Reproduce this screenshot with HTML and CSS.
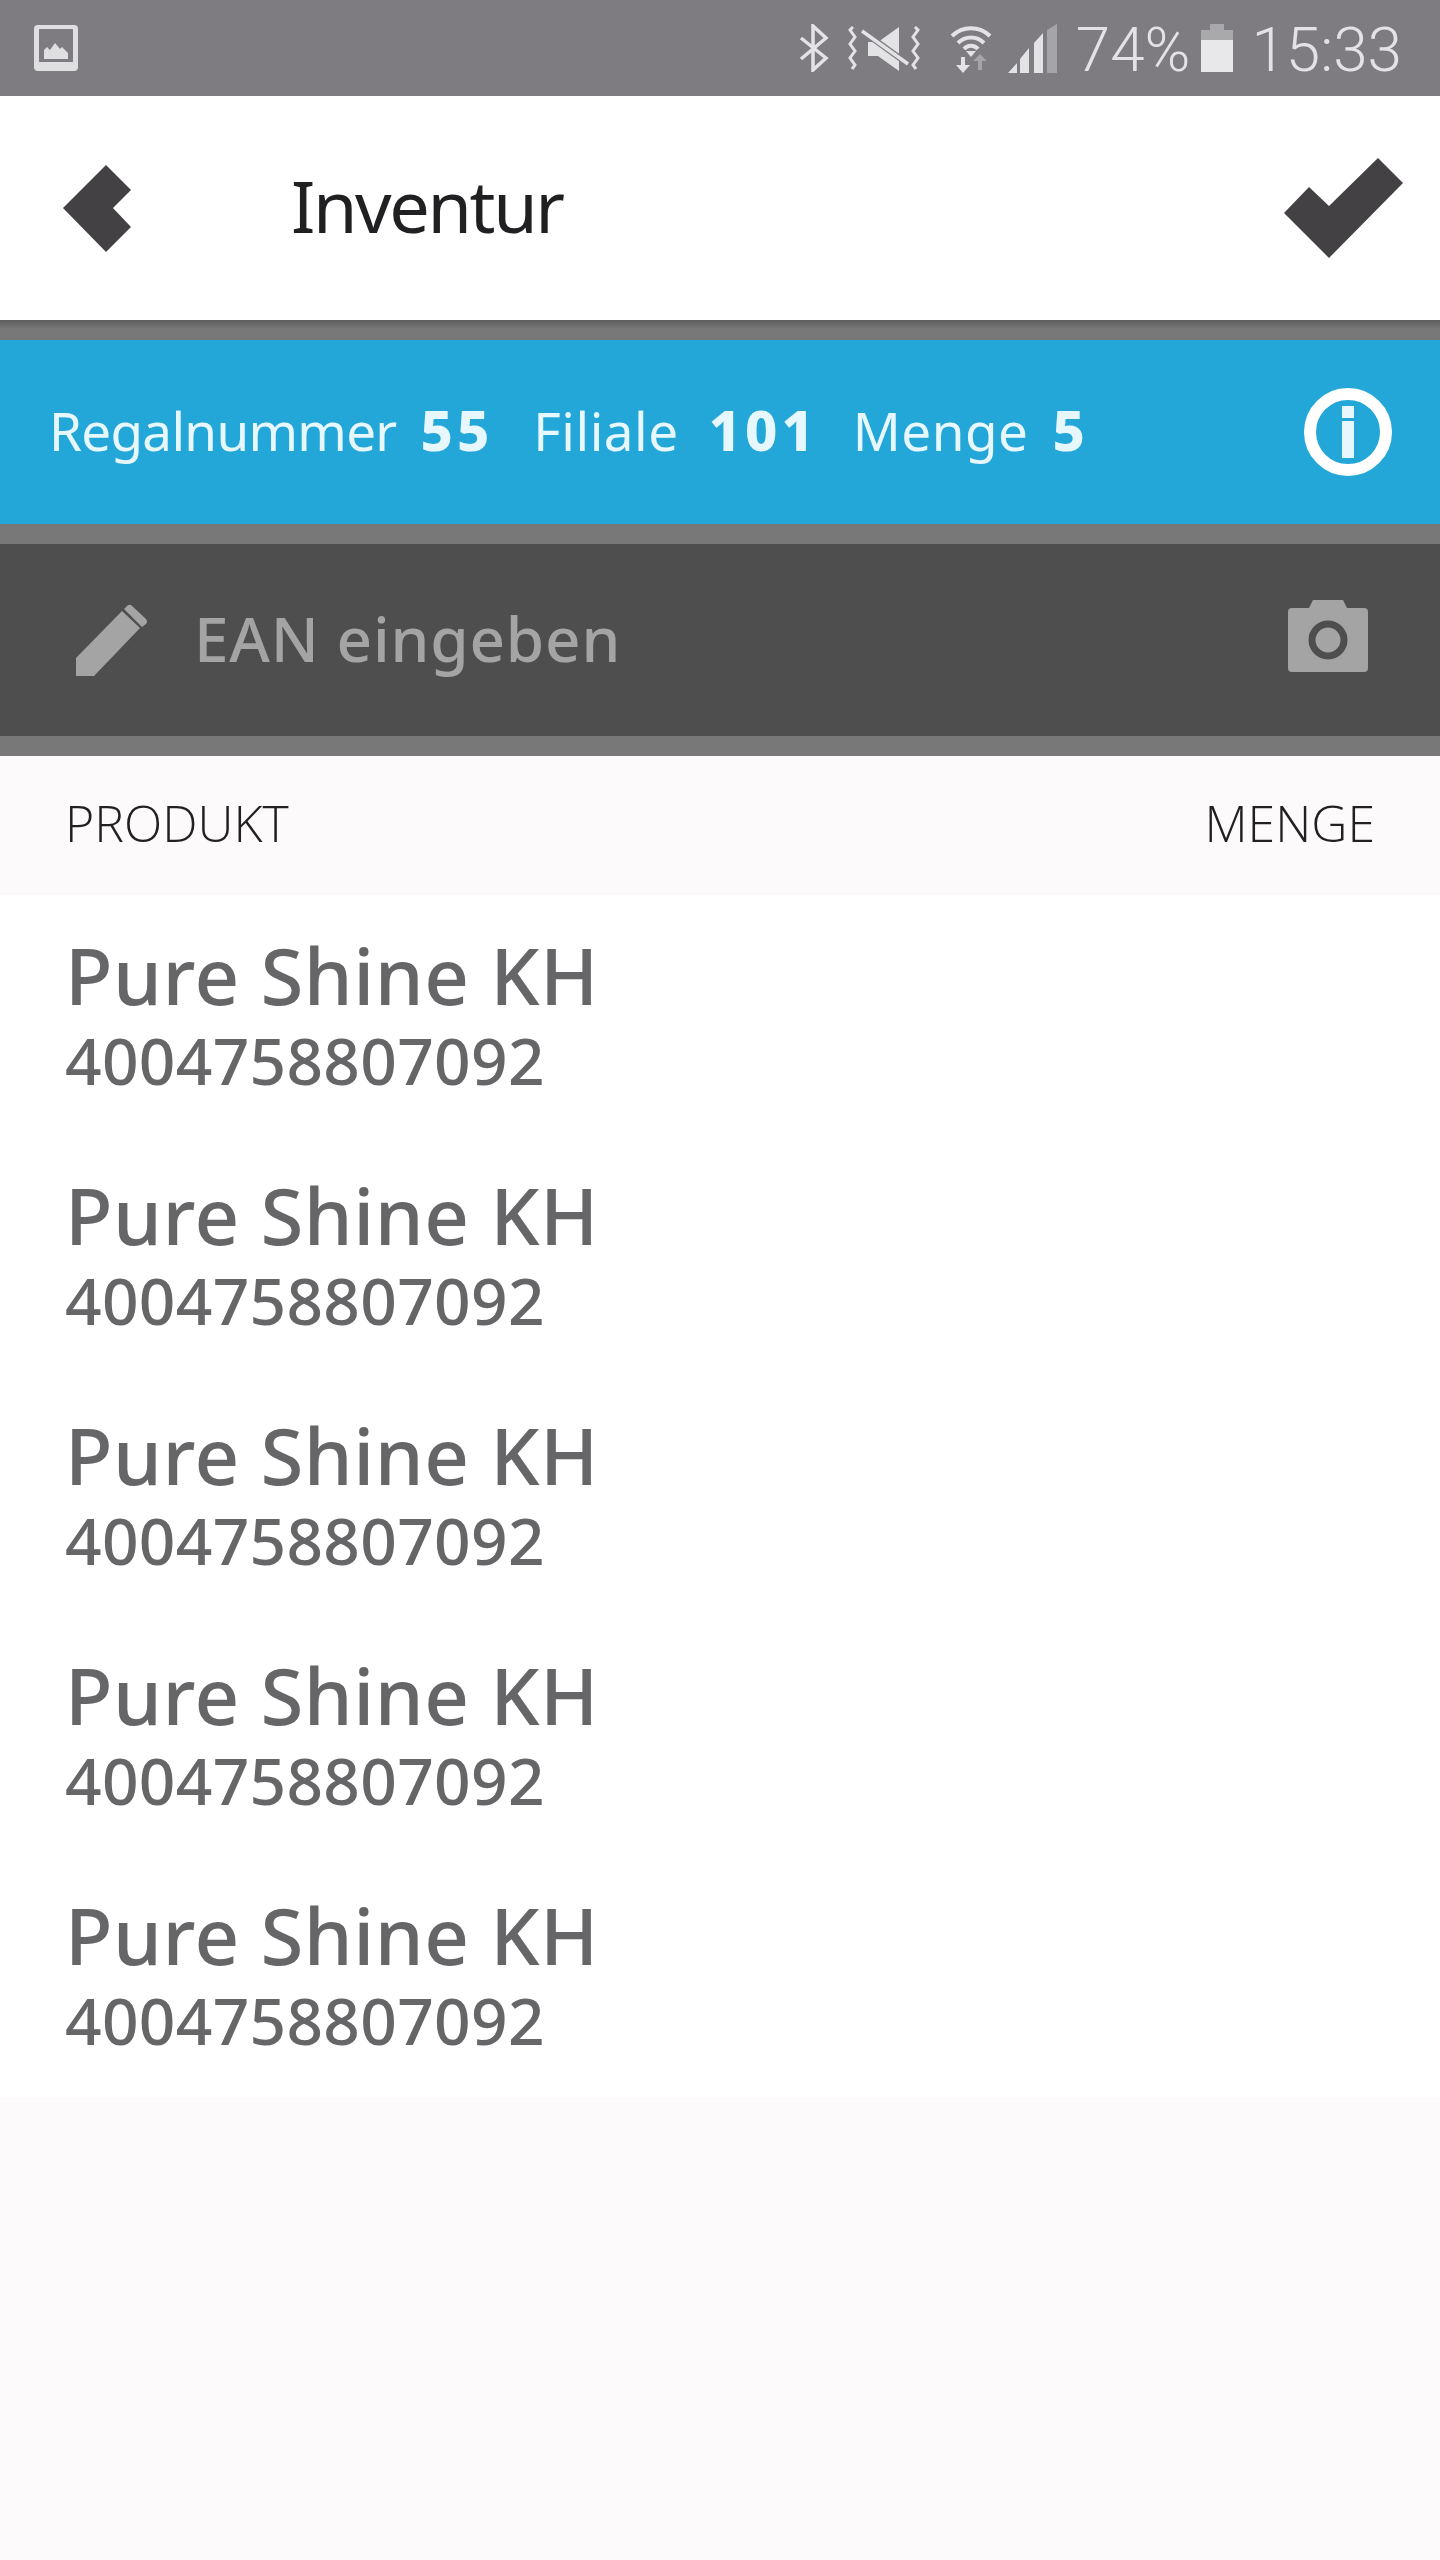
FILE: index.html
```html
<!DOCTYPE html>
<html lang="de">
<head>
  <meta charset="UTF-8">
  <title>Inventur</title>
  <link rel="stylesheet" href="styles.css">
</head>
<body>

  <div class="statusbar">
    <svg class="st-image" width="44" height="46" viewBox="0 0 44 46">
      <rect width="44" height="46" rx="4" fill="#dfdee0"/>
      <rect x="5" y="4" width="34" height="33" fill="#7e7c80"/>
      <path d="M10 34V25l3-3 3 3 5-7 5 6 2-2 6 6v6z" fill="#dfdee0"/>
    </svg>
    <div class="st-right">
      <svg class="st-bt" width="32" height="48" viewBox="0 0 32 48">
        <path d="M3 14l25 20-13 12V2l13 12L3 35" fill="none" stroke="#e3e2e4" stroke-width="3.5"/>
      </svg>
      <svg class="st-mute" width="74" height="46" viewBox="0 0 74 46">
        <path d="M5 2l-3 3 5 7-5 7 5 7-5 7 5 7-3 4M67 2l3 3-5 7 5 7-5 7 5 7-5 7 3 4" fill="none" stroke="#e3e2e4" stroke-width="3"/>
        <path d="M51 2v44L30 31H20V17h10z" fill="#e3e2e4"/>
        <path d="M13 5l47 34" stroke="#7e7c80" stroke-width="6"/>
        <path d="M14 6l46 33" stroke="#e3e2e4" stroke-width="3.5"/>
      </svg>
      <svg class="st-wifi" width="42" height="50" viewBox="0 0 42 50">
        <path d="M2 13a27 27 0 0 1 38 0M8 20a18 18 0 0 1 26 0M14 26a9 9 0 0 1 14 0" fill="none" stroke="#e3e2e4" stroke-width="4"/>
        <path d="M16 28h10l-5 6z" fill="#e3e2e4"/>
        <path d="M11 34v8h-5l7 8 7-8h-5v-8z" fill="#e3e2e4"/>
        <path d="M28 47v-9h-5l7-7 7 7h-5v9z" fill="#a5a4a6"/>
      </svg>
      <svg class="st-signal" width="49" height="49" viewBox="0 0 49 49">
        <path d="M0 49l9-10v10zM12 49V35l9-11v25zM26 49V19l9-10v40z" fill="#e3e2e4"/>
        <path d="M39 49V6l10-6v49z" fill="#a5a4a6"/>
      </svg>
      <span class="st-text st-batt-pct">74%</span>
      <svg class="st-batt" width="32" height="48" viewBox="0 0 32 48">
        <path d="M9 0h14v6h9v10H0V6h9z" fill="#a9a8aa"/>
        <rect y="16" width="32" height="32" fill="#e8e7e9"/>
      </svg>
      <span class="st-text st-time">15:33</span>
    </div>
  </div>

  <div class="header">
    <svg class="back-icon" width="68" height="87" viewBox="0 0 68 87">
      <path d="M43 0l25 25-18 18 18 19-25 25L0 43z" fill="#434144"/>
    </svg>
    <h1 class="title">Inventur</h1>
    <svg class="check-icon" width="119" height="100" viewBox="0 0 119 100">
      <path d="M94 0l25 25-74 75L0 55l25-26 20 19z" fill="#434144"/>
    </svg>
  </div>
  <div class="band band-top"></div>

  <div class="infobar">
    <div class="info-items">
      <span class="info-label info-label-long">Regalnummer</span><b class="info-val">55</b>
      <span class="info-label">Filiale</span><b class="info-val info-val-mid">101</b>
      <span class="info-label">Menge</span><b class="info-val">5</b>
    </div>
    <svg class="info-icon" width="88" height="88" viewBox="0 0 88 88">
      <circle cx="44" cy="44" r="38" fill="none" stroke="#fff" stroke-width="12"/>
      <rect x="38" y="18" width="12" height="12" fill="#e6f7fd"/>
      <rect x="38" y="33" width="12" height="37" fill="#e6f7fd"/>
    </svg>
  </div>
  <div class="band"></div>

  <div class="searchbar">
    <svg class="pencil-icon" width="72" height="72" viewBox="0 0 72 72">
      <path d="M0 54L46 7l18 17-46 48H0zM51 2q2-2 4-1l15 14q2 3 0 5l-4 3L48 5z" fill="#a5a4a5"/>
    </svg>
    <span class="search-text">EAN eingeben</span>
    <svg class="camera-icon" width="80" height="72" viewBox="0 0 80 72">
      <path d="M4 8h17l4-8h30l4 8h17q4 0 4 4v56q0 4-4 4H4q-4 0-4-4V12q0-4 4-4z" fill="#a5a4a5"/>
      <circle cx="40" cy="40" r="16" fill="#a5a4a5" stroke="#4f4e4f" stroke-width="7"/>
    </svg>
  </div>
  <div class="band"></div>

  <div class="table-head">
    <span>PRODUKT</span>
    <span>MENGE</span>
  </div>

  <div class="rows">
    <div class="row">
      <div class="row-name">Pure Shine KH</div>
      <div class="row-ean">4004758807092</div>
    </div>
    <div class="row">
      <div class="row-name">Pure Shine KH</div>
      <div class="row-ean">4004758807092</div>
    </div>
    <div class="row">
      <div class="row-name">Pure Shine KH</div>
      <div class="row-ean">4004758807092</div>
    </div>
    <div class="row">
      <div class="row-name">Pure Shine KH</div>
      <div class="row-ean">4004758807092</div>
    </div>
    <div class="row">
      <div class="row-name">Pure Shine KH</div>
      <div class="row-ean">4004758807092</div>
    </div>
  </div>

</body>
</html>
```

FILE: styles.css
```css
body {
  font-family: 'Noto Sans', sans-serif;
  background-color: #fcfafb;
  margin: 0;
  height: 2560px;
  overflow: hidden;
}

svg {
  display: block;
  flex-shrink: 0;
}

.statusbar {
  height: 96px;
  background-color: #7e7c80;
  display: flex;
  align-items: center;
  justify-content: space-between;
  padding: 0 38px 0 34px;
}

.st-right {
  display: flex;
  align-items: center;
}

.st-text {
  font-family: Roboto, sans-serif;
  font-weight: 300;
  font-size: 62px;
  line-height: 96px;
  padding-top: 4px;
  color: #e3e2e4;
}

.st-mute { margin-left: 18px; }
.st-wifi { margin-left: 28px; }
.st-signal { margin-left: 16px; }
.st-batt-pct { margin-left: 19px; }
.st-batt { margin-left: 11px; }
.st-time { margin-left: 18px; }

.header {
  height: 224px;
  background-color: #fff;
  display: flex;
  align-items: center;
  padding: 0 37px 0 63px;
}

.title {
  margin: 0 0 6px 160px;
  flex: 1;
  font-size: 72px;
  font-weight: 400;
  letter-spacing: -2.4px;
  color: #201f21;
}

.band {
  height: 20px;
  background-color: #797878;
}

.band-top {
  background: linear-gradient(#5f5e5f, #797878 45%);
}

.infobar {
  height: 184px;
  background-color: #23a7d8;
  display: flex;
  align-items: center;
  justify-content: space-between;
  padding: 0 48px 0 49px;
}

.info-items {
  display: flex;
  align-items: baseline;
  margin-bottom: 6px;
  font-size: 53px;
  letter-spacing: 0.5px;
  color: #e6f7fd;
}

.info-label-long {
  letter-spacing: -0.7px;
}

.info-val {
  margin: 0 40px 0 24px;
  font-size: 56px;
  font-weight: 800;
  letter-spacing: 4px;
}

.info-val-mid {
  margin: 0 35px 0 30px;
}

.searchbar {
  height: 192px;
  background-color: #4f4e4f;
  display: flex;
  align-items: center;
  padding: 0 72px 0 76px;
}

.search-text {
  flex: 1;
  margin: 0 0 5px 46px;
  font-size: 62px;
  font-weight: 500;
  letter-spacing: 0.8px;
  color: #a5a4a5;
}

.camera-icon {
  margin-bottom: 8px;
}

.table-head {
  height: 133px;
  padding: 0 65px 6px;
  display: flex;
  align-items: center;
  justify-content: space-between;
  font-family: 'Open Sans', sans-serif;
  font-size: 50px;
  font-weight: 300;
  color: #201f21;
}

.rows {
  background-color: #fff;
  padding-bottom: 3px;
}

.row {
  height: 240px;
  box-sizing: border-box;
  padding: 28px 65px 0;
  color: #666567;
}

.row-name {
  font-size: 78px;
  font-weight: 500;
  line-height: 104px;
  letter-spacing: 0.5px;
}

.row-ean {
  font-size: 64px;
  font-weight: 500;
  line-height: 68px;
  letter-spacing: 0.3px;
}
```
